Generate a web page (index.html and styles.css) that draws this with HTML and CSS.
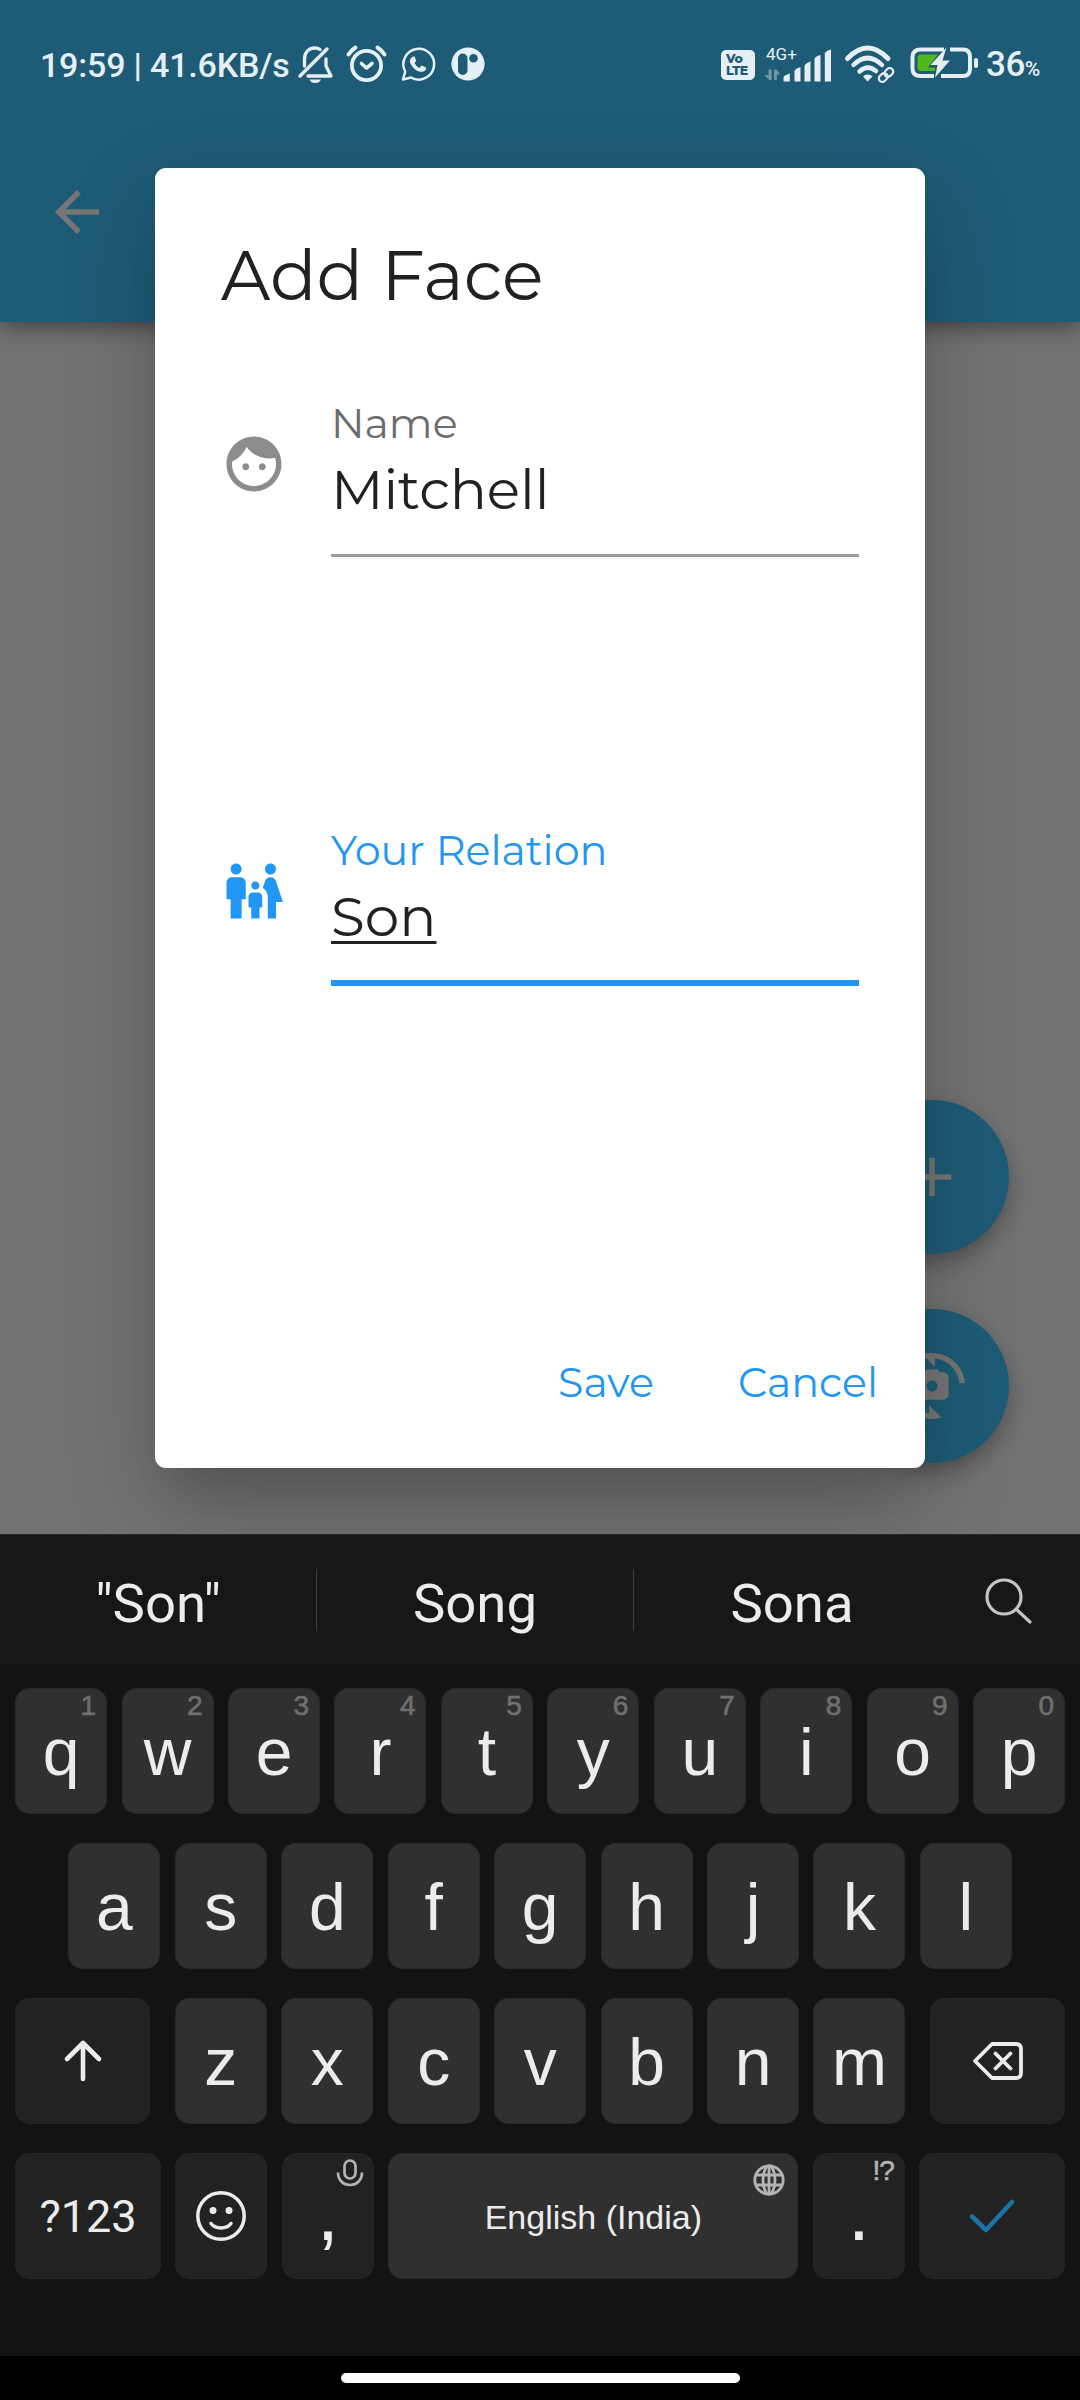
FILE: index.html
```html
<!DOCTYPE html>
<html lang="en">
<head>
<meta charset="utf-8">
<title>Add Face</title>
<link rel="stylesheet" href="styles.css">
</head>
<body>
<div class="phone">
  <main class="app">
    <header class="app-bar">
      <div class="status">
        <span class="status-time">19:59 | 41.6KB/s</span>
        <svg class="status-left-icons" width="200" height="50" viewBox="0 0 200 50" fill="none" stroke="#e6f0f4" stroke-linecap="round" stroke-linejoin="round">
          <path d="M37 9L10 36" stroke-width="3.4"/>
          <path d="M14.5 26V19C14.5 12 19 8 25 8Q28 8 30 9.500M36 19V26L41 36H18" stroke-width="3.300"/>
          <path d="M19.500 39.500H31Q29.500 43 25.200 43T19.500 39.500Z" fill="#e6f0f4" stroke="none"/>
          <circle cx="76.500" cy="25.500" r="14.600" stroke-width="3.800"/>
          <path d="M71.500 23.500L76.500 28L82 23.500" stroke-width="3.600"/>
          <path d="M58.500 14.500Q61 10.500 65.500 7.500M94.500 14.500Q92 10.500 87.500 7.500" stroke-width="4"/>
          <path d="M113 39.500L115.200 31.500A15.400 15.400 0 1 1 121 37.500Z" stroke-width="2.500"/>
          <path d="M123 16.500C120 18 119 21 121 24.500C124 29.500 129 33 133.500 31.500Q136.500 30 136 27.500L131.500 25.500L129.500 28Q126 26.500 124.500 23L126.300 20.700L124.500 16.500Z" fill="#e6f0f4" stroke="none"/>
          <circle cx="178" cy="24" r="16.600" fill="#e6f0f4" stroke="none"/>
          <rect x="168" y="13.500" width="9.500" height="21.500" rx="4.700" fill="#1e5b76" stroke="none"/>
          <circle cx="183.500" cy="18.200" r="4.300" fill="#1e5b76" stroke="none"/>
        </svg>
        <span class="volte">Vo<br>LTE</span>
        <div class="signal">
          <span>4G+</span>
          <svg width="68" height="34" viewBox="0 0 68 34" fill="#e6f0f4">
            <path d="M19.500 32V28.500Q19.500 26.500 25.800 24.500V32.500H20ZM30.500 32.500V22Q31 20 36.500 18V32.500ZM40.500 32.500V17Q41 14.500 46.500 12.500V32.500ZM50.500 32.500V10Q51 7.500 56.500 6V32.500ZM60.800 32.500V4.500Q61.500 2 67 .5V32.500Z"/>
            <path d="M4.500 20.500H7.700V31H5.200L.5 26H4.500ZM10 20.500H12.500L16 25.500H12.800V31H10Z" opacity=".4"/>
          </svg>
        </div>
        <svg class="wifi" width="52" height="40" viewBox="0 0 52 40" fill="none" stroke="#e6f0f4" stroke-linecap="round">
          <path d="M3.500 13.500Q23.500-7.500 44 13.500" stroke-width="5"/>
          <path d="M9.500 20Q23.500 6 38 20" stroke-width="4.500"/>
          <path d="M15.500 26.500Q23.500 19 32 26" stroke-width="4.500"/>
          <path d="M23.500 29.500Q27 29.500 28.500 31.500L23.500 36.500L19 31.500Q20.500 29.500 23.500 29.500Z" fill="#e6f0f4" stroke="none"/>
          <g transform="rotate(-42 42 30)" stroke="#1e5b76" stroke-width="5"><rect x="33" y="26.500" width="10" height="7" rx="3.500"/><rect x="41" y="26.500" width="10" height="7" rx="3.500"/></g>
          <g transform="rotate(-42 42 30)" stroke-width="2.200"><rect x="33.500" y="26.500" width="9.500" height="7" rx="3.500"/><rect x="41" y="26.500" width="9.500" height="7" rx="3.500"/></g>
        </svg>
        <svg class="battery" width="70" height="34" viewBox="0 0 70 34">
          <path d="M34 3.500H11Q2.500 3.500 2.500 11V22.500Q2.500 30 11 30H24M40 3.500H53Q60 3.500 60 11V22.500Q60 30 53 30H31" fill="none" stroke="#e6f0f4" stroke-width="4"/>
          <path d="M10.500 8.500H28L18 21.500H25V25H11Q7.500 25 7.500 21.500V12Q7.500 8.500 10.500 8.500Z" fill="#50b81c"/>
          <path d="M36.500 1.500L20.500 19H27.500L25 31.500L40 14.500H32.500Z" fill="#e6f0f4"/>
          <rect x="64" y="12" width="4" height="10" rx="2" fill="#e6f0f4"/>
        </svg>
        <span class="percent">36<small>%</small></span>
      </div>
      <svg class="back" width="66" height="66" viewBox="0 0 24 24" fill="#767676"><path d="M20 11H7.830l5.590-5.590L12 4l-8 8 8 8 1.410-1.410L7.830 13H20v-2z"/></svg>
    </header>

    <div class="fabs">
      <div class="fab"><svg width="66" height="66" viewBox="0 0 24 24"><path d="M19 13h-6v6h-2v-6H5v-2h6V5h2v6h6v2z"/></svg></div>
      <div class="fab"><svg width="66" height="66" viewBox="0 0 24 24"><path d="M16 7h-1l-1-1h-4L9 7H8c-1.100 0-2 .9-2 2v6c0 1.100.9 2 2 2h8c1.100 0 2-.9 2-2V9c0-1.100-.9-2-2-2zm-4 7c-1.100 0-2-.9-2-2s.9-2 2-2 2 .9 2 2-.9 2-2 2z"/><path d="M8.570.51l4.480 4.480V2.040c4.720.47 8.480 4.230 8.950 8.950h2C23.340 3.020 15.490-1.590 8.570.51zM10.950 21.960C6.230 21.490 2.470 17.730 2 13.010H0c.66 7.970 8.510 12.580 15.430 10.480l-4.480-4.480v2.950z"/></svg></div>
    </div>

    <section class="dialog">
      <h1 class="title">Add Face</h1>
      <div class="field">
        <svg class="field-icon" width="66" height="66" viewBox="0 0 24 24" fill="#8c8c8c"><path d="M9 11.750c-.69 0-1.250.56-1.250 1.250s.56 1.250 1.250 1.250 1.250-.56 1.250-1.250-.56-1.250-1.250-1.250zm6 0c-.69 0-1.250.56-1.250 1.250s.56 1.250 1.250 1.250 1.250-.56 1.250-1.250-.56-1.250-1.250-1.250zM12 2C6.480 2 2 6.480 2 12s4.480 10 10 10 10-4.480 10-10S17.520 2 12 2zm0 18c-4.410 0-8-3.590-8-8 0-.29.02-.58.05-.86 2.360-1.050 4.230-2.980 5.210-5.370C11.070 8.330 14.050 10 17.420 10c.78 0 1.530-.09 2.250-.26.21.71.33 1.470.33 2.260 0 4.410-3.590 8-8 8z"/></svg>
        <div class="field-body">
          <label class="label">Name</label>
          <div class="value">Mitchell</div>
        </div>
      </div>
      <div class="field active">
        <svg class="field-icon" width="66" height="66" viewBox="0 0 24 24" fill="#2196f3"><path d="M16 4c0-1.110.89-2 2-2s2 .89 2 2-.89 2-2 2-2-.89-2-2zm4 18v-6h2.500l-2.540-7.630C19.680 7.550 18.920 7 18.060 7h-.12c-.86 0-1.630.55-1.900 1.370l-.86 2.580c1.080.6 1.820 1.730 1.820 3.050v8h3zm-7.500-10.500c.83 0 1.500-.67 1.500-1.500s-.67-1.500-1.500-1.500S11 9.170 11 10s.67 1.500 1.500 1.500zM5.500 6c1.110 0 2-.89 2-2s-.89-2-2-2-2 .89-2 2 .89 2 2 2zm2 16v-7H9V9c0-1.100-.9-2-2-2H4c-1.100 0-2 .9-2 2v6h1.500v7h4zm6.500 0v-4h1v-4c0-.82-.68-1.500-1.500-1.500h-2c-.82 0-1.500.68-1.500 1.500v4h1v4h3z"/></svg>
        <div class="field-body">
          <label class="label">Your Relation</label>
          <div class="value"><u>Son</u></div>
        </div>
      </div>
      <div class="actions"><span class="save">Save</span><span class="cancel">Cancel</span></div>
    </section>
  </main>

  <section class="keyboard">
    <div class="suggestions">
      <span>"Son"</span><i></i><span>Song</span><i></i><span>Sona</span>
      <svg width="50" height="50" viewBox="0 0 50 50" fill="none" stroke="#c4c4c4" stroke-width="3.200" stroke-linecap="round"><circle cx="20" cy="20" r="17"/><path d="M32.500 32.500L46 45"/></svg>
    </div>
    <div class="keys">
      <div class="row">
        <div class="key">q<sup>1</sup></div><div class="key">w<sup>2</sup></div><div class="key">e<sup>3</sup></div><div class="key">r<sup>4</sup></div><div class="key">t<sup>5</sup></div><div class="key">y<sup>6</sup></div><div class="key">u<sup>7</sup></div><div class="key">i<sup>8</sup></div><div class="key">o<sup>9</sup></div><div class="key">p<sup>0</sup></div>
      </div>
      <div class="row">
        <div class="key">a</div><div class="key">s</div><div class="key">d</div><div class="key">f</div><div class="key">g</div><div class="key">h</div><div class="key">j</div><div class="key">k</div><div class="key">l</div>
      </div>
      <div class="row">
        <div class="key dark shift"><svg width="40" height="44" viewBox="0 0 40 44" fill="none" stroke="#ececec" stroke-width="4.600" stroke-linecap="round" stroke-linejoin="round"><path d="M20 40V4M4 20L20 4L36 20"/></svg></div>
        <div class="key">z</div><div class="key">x</div><div class="key">c</div><div class="key">v</div><div class="key">b</div><div class="key">n</div><div class="key">m</div>
        <div class="key dark backspace"><svg width="52" height="40" viewBox="0 0 52 40" fill="none" stroke="#ececec" stroke-width="3.800" stroke-linecap="round" stroke-linejoin="round"><path d="M20 3H44Q49 3 49 8V32Q49 37 44 37H20L3 20ZM23.500 12.500L38.500 27.500M38.500 12.500L23.500 27.500"/></svg></div>
      </div>
      <div class="row">
        <div class="key dark symbols">?123</div>
        <div class="key dark"><svg width="54" height="54" viewBox="0 0 54 54" fill="none" stroke="#ececec" stroke-width="3.500" stroke-linecap="round"><circle cx="27" cy="27" r="23.200"/><path d="M17 34.500Q20.500 39 27 39T37 34.500"/><g fill="#ececec" stroke="none"><circle cx="19" cy="21.500" r="3.500"/><circle cx="35" cy="21.500" r="3.500"/></g></svg></div>
        <div class="key dark mark">,<svg class="mic" width="28" height="28" viewBox="0 0 28 28" fill="none" stroke="#b4b4b4" stroke-width="2.700"><rect x="8.500" y="1.500" width="11" height="18" rx="5.500"/><path d="M2 13.500C2 21 7 26 14 26S26 21 26 13.500"/></svg></div>
        <div class="key space">English (India)<svg class="globe" width="34" height="34" viewBox="0 0 34 34" fill="none" stroke="#b4b4b4" stroke-width="2.800"><circle cx="17" cy="17" r="14.200"/><ellipse cx="17" cy="17" rx="6" ry="14.200"/><path d="M17 3V31M4 12H30M4 22H30"/></svg></div>
        <div class="key dark mark">.<sup>!?</sup></div>
        <div class="key dark enter"><svg width="48" height="36" viewBox="0 0 48 36" fill="none" stroke="#1a74a3" stroke-width="4.600" stroke-linecap="round" stroke-linejoin="round"><path d="M4 18.500L18 32L44 4"/></svg></div>
      </div>
    </div>
  </section>
  <nav class="nav"><span></span></nav>
</div>
</body>
</html>
```
FILE: styles.css
```css
* { box-sizing: border-box; }
body { margin: 0; background: #000; }
svg { display: block; flex: none; overflow: visible; }

.phone {
  width: 1080px;
  height: 2400px;
  display: flex;
  flex-direction: column;
  overflow: hidden;
}

.app {
  position: relative;
  height: 1534px;
  background: #737373;
  overflow: hidden;
}
.app-bar {
  height: 322px;
  background: #1e5b76;
  box-shadow: 0 6px 20px rgba(0, 0, 0, .4);
}

.status {
  height: 179px;
  padding: 40px 36px 0 40px;
  display: flex;
  align-items: flex-start;
  color: #e6f0f4;
  font-family: Roboto, sans-serif;
}
.status-time {
  width: 250px;
  font-size: 34px;
  font-weight: 500;
  line-height: 50px;
  letter-spacing: -.2px;
  white-space: nowrap;
}
.volte {
  width: 34px;
  height: 30px;
  margin: 10px 0 0 231px;
  padding: 3px 0 0 5px;
  border-radius: 5px;
  background: #e6f0f4;
  color: #1e5b76;
  font: 800 12.500px/12px Montserrat, "Open Sans", sans-serif;
  letter-spacing: -.5px;
}
.signal {
  position: relative;
  width: 68px;
  margin: 10px 0 0 9px;
}
.signal span {
  position: absolute;
  left: 2px;
  top: -6px;
  font-size: 17px;
  line-height: 20px;
}
.signal svg { margin-top: -1px; }
.wifi { margin: 5px 0 0 12px; }
.battery { margin: 6px 0 0 14px; }
.percent {
  margin-left: 6px;
  font-size: 35px;
  font-weight: 500;
  line-height: 50px;
  letter-spacing: -.5px;
  white-space: nowrap;
}
.percent small { font-size: 21px; }
.back { margin-left: 44px; }

.fabs {
  position: absolute;
  left: 854.500px;
  top: 1099.500px;
  display: grid;
  gap: 55px;
}
.fab {
  width: 154px;
  height: 154px;
  border-radius: 50%;
  display: grid;
  place-items: center;
  background: #1e5b76;
  fill: #767676;
  box-shadow: 0 10px 22px rgba(0, 0, 0, .3);
}

.dialog {
  position: absolute;
  left: 155px;
  top: 168px;
  width: 770px;
  height: 1300px;
  padding: 67px 66px 0;
  border-radius: 11px;
  background: #fff;
  box-shadow: 0 30px 41px -19px rgba(0, 0, 0, .12), 0 40px 90px rgba(0, 0, 0, .22);
  color: #212121;
  font-family: Montserrat, Inter, sans-serif;
  font-weight: 400;
}
.title {
  margin: 0 0 83px;
  font-size: 68.750px;
  font-weight: 400;
  line-height: 80px;
}
.field { display: flex; gap: 44px; margin-bottom: 268px; }
.field-icon { margin-top: 33px; }
.field-body { flex: 1; border-bottom: 3px solid #9b9b9b; }
.label {
  display: block;
  margin-bottom: 7px;
  color: #6c6c6c;
  font-size: 41.250px;
  line-height: 50px;
}
.value {
  padding-bottom: 29px;
  font-size: 55px;
  line-height: 70px;
}
.value u { text-decoration-thickness: 3px; text-underline-offset: 5px; }
.active { margin-bottom: 371px; }
.active .field-body { border-bottom: 6px solid #2196f3; }
.active .label { color: #2196f3; }
.active .value { padding-bottom: 28px; }
.actions {
  display: flex;
  justify-content: flex-end;
  gap: 84px;
  margin-right: -19px;
  color: #2196f3;
  font-size: 41.250px;
  line-height: 50px;
}

.keyboard {
  height: 822px;
  background: #131313;
  color: #ececec;
}
.suggestions {
  height: 131px;
  display: flex;
  align-items: center;
  background: #161719;
  border-top: 1px solid #2b2b2c;
  font: 54.500px/64px Roboto, sans-serif;
}
.suggestions span { width: 316px; padding-top: 5px; text-align: center; }
.suggestions i { width: 1px; height: 62px; background: #3c3d3f; }
.suggestions svg { margin: 3px 0 0 34px; }

.keys {
  display: grid;
  gap: 29px;
  padding: 23px 15px;
}
.row { display: flex; justify-content: center; gap: 14.440px; }
.key {
  position: relative;
  flex: none;
  width: 92px;
  height: 126px;
  border-radius: 15px;
  background: #303030;
  box-shadow: inset 0 0 0 1px #282828;
  text-align: center;
  font: 66px/128px "Liberation Sans", sans-serif;
}
.key > svg { position: absolute; inset: 0; margin: auto; }
.key sup {
  position: absolute;
  right: 11px;
  top: 4px;
  color: #6f6f6f;
  font-size: 28px;
  line-height: 28px;
  -webkit-text-stroke: .6px currentColor;
}
.dark { background: #222; box-shadow: inset 0 0 0 1px #252525; }
.shift { width: 135px; margin-right: 10.400px; }
.backspace { width: 135px; margin-left: 10.400px; }
.symbols { width: 146px; font: 45px/128px Roboto, sans-serif; }
.mark { font-size: 80px; line-height: 119px; }
.mark sup { top: 4px; color: #b4b4b4; letter-spacing: -1px; }
.key > .mic { inset: 6px 10px auto auto; margin: 0; }
.space { flex: 1; font-size: 34px; }
.key > .globe { inset: 10px 12px auto auto; margin: 0; }
.enter { width: 146px; }

.nav {
  height: 44px;
  padding-top: 17px;
  background: #000;
}
.nav span {
  display: block;
  width: 399px;
  height: 10px;
  margin: 0 auto;
  border-radius: 5px;
  background: #fff;
}
```
